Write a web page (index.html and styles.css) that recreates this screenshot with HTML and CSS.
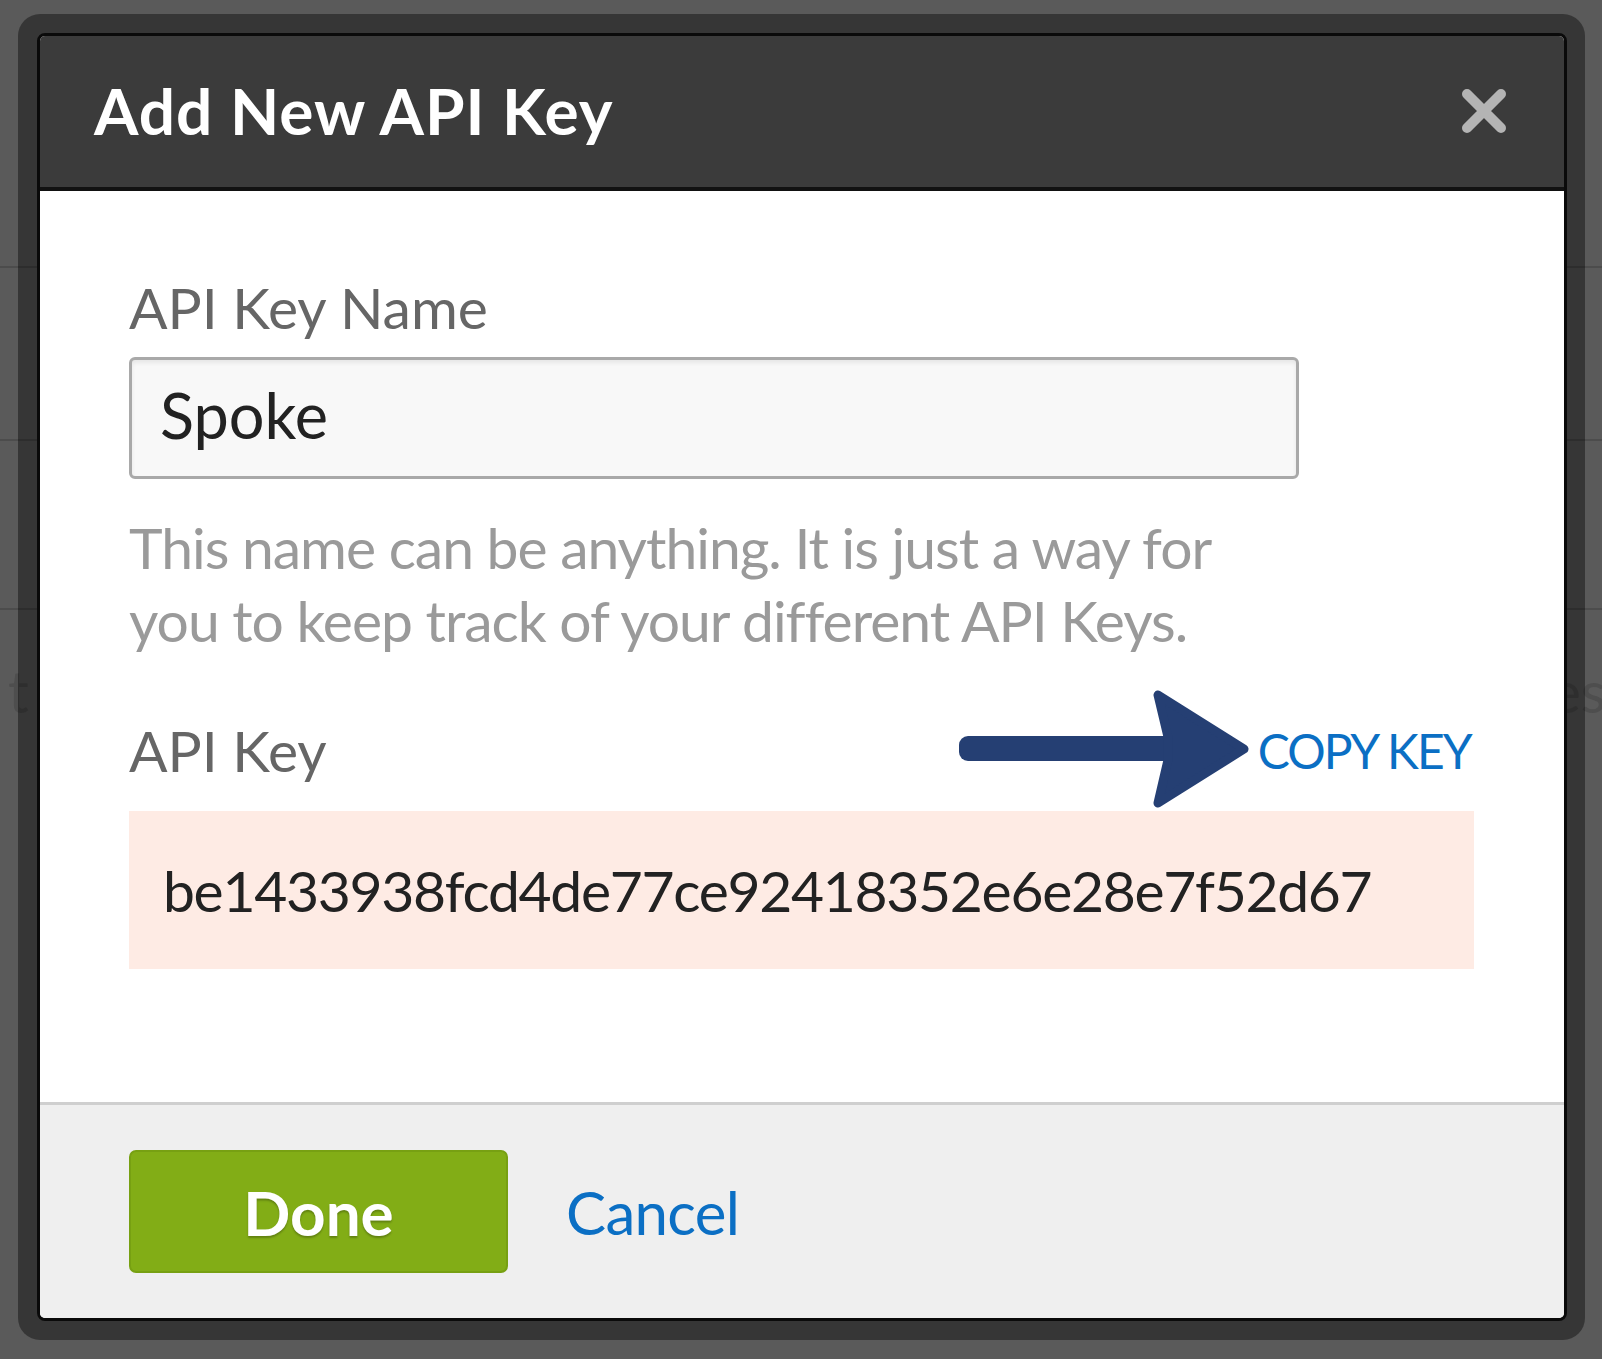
FILE: index.html
```html
<!DOCTYPE html>
<html lang="en">
<head>
<meta charset="utf-8">
<title>Add New API Key</title>
<link rel="stylesheet" href="styles.css">
</head>
<body>
  <div class="page">
    <div class="bg-row bg-row-1"></div>
    <div class="bg-row bg-row-2"></div>
    <div class="bg-row bg-row-3"></div>
    <div class="bg-row bg-row-4">
      <span class="bg-text-left">t</span>
      <span class="bg-text-right">es</span>
    </div>
  </div>

  <div class="overlay">
    <div class="frame">
      <div class="modal">
        <div class="modal-header">
          <h1 class="modal-title">Add New API Key</h1>
          <svg class="close-icon" width="48" height="48" viewBox="0 0 48 48" aria-label="Close">
            <path d="M7 7 L41 41 M41 7 L7 41" stroke="#b4b4b4" stroke-width="10" stroke-linecap="round" fill="none"/>
          </svg>
        </div>

        <div class="modal-body">
          <label class="field-label">API Key Name</label>
          <div class="text-input">Spoke</div>
          <p class="help-text">This name can be anything. It is just a way for<br>you to keep track of your different API Keys.</p>

          <div class="key-row">
            <span class="field-label key-label">API Key</span>
            <div class="copy-group">
              <svg class="arrow" width="294" height="118" viewBox="0 0 294 118">
                <rect x="2" y="46" width="216" height="25" rx="9" fill="#253f73"/>
                <path d="M201 5 L287 59 L201 113 L211 70 L211 47 Z" fill="#253f73" stroke="#253f73" stroke-width="9" stroke-linejoin="round"/>
              </svg>
              <span class="copy-key">COPY KEY</span>
            </div>
          </div>

          <div class="key-box">be1433938fcd4de77ce92418352e6e28e7f52d67</div>
        </div>

        <div class="modal-footer">
          <button class="btn-done">Done</button>
          <span class="cancel-link">Cancel</span>
        </div>
      </div>
    </div>
  </div>
</body>
</html>
```

FILE: styles.css
```css
html, body {
  margin: 0;
  padding: 0;
}

body {
  width: 1602px;
  height: 1359px;
  overflow: hidden;
  background: #5a5a5a;
  font-family: "Lato", "Liberation Sans", sans-serif;
  position: relative;
}

/* page behind the modal */
.page {
  display: flex;
  flex-direction: column;
}

.bg-row {
  border-bottom: 2px solid #4c4c4c;
}

.bg-row-1 { height: 266px; }
.bg-row-2 { height: 171px; }
.bg-row-3 { height: 167px; }

.bg-row-4 {
  height: 140px;
  border-bottom: none;
  display: flex;
  justify-content: space-between;
  align-items: center;
  font-size: 58px;
  color: #4e4e4e;
  padding-top: 10px;
}

.bg-text-left { margin-left: 8px; }
.bg-text-right { margin-right: -4px; }

/* overlay */
.overlay {
  position: absolute;
  left: 0;
  top: 0;
  width: 1602px;
  height: 1359px;
}

.frame {
  margin: 14px 0 0 18px;
  width: 1567px;
  height: 1326px;
  box-sizing: border-box;
  padding: 19px 18px 19px 19px;
  border-radius: 22px;
  background: rgba(0, 0, 0, 0.4);
}

.modal {
  height: 100%;
  box-sizing: border-box;
  border: 3px solid #0a0a0a;
  border-radius: 8px;
  overflow: hidden;
  background: #ffffff;
  display: flex;
  flex-direction: column;
}

.modal-header {
  height: 155px;
  flex: none;
  box-sizing: border-box;
  background: #3b3b3b;
  border-bottom: 4px solid #111111;
  display: flex;
  align-items: center;
  justify-content: space-between;
  padding: 0 56px 2px 54px;
}

.modal-title {
  margin: 0;
  font-family: "Lato", "Liberation Sans", sans-serif;
  font-weight: 700;
  font-size: 64px;
  color: #ffffff;
  letter-spacing: 1px;
}

.close-icon {
  display: block;
}

.modal-body {
  flex: 1;
  padding: 80px 90px 0 89px;
  display: flex;
  flex-direction: column;
  align-items: flex-start;
}

.field-label {
  display: block;
  font-size: 57px;
  line-height: 72px;
  color: #666666;
}

.text-input {
  margin-top: 14px;
  width: 1170px;
  height: 122px;
  box-sizing: border-box;
  border: 3px solid #a9a9a9;
  border-radius: 6px;
  background: #f8f8f8;
  box-shadow: inset 0 3px 4px rgba(0, 0, 0, 0.07);
  padding-left: 28px;
  font-size: 63px;
  line-height: 110px;
  color: #222222;
}

.help-text {
  margin: 32px 0 0 0;
  font-size: 57px;
  line-height: 73px;
  letter-spacing: -1px;
  color: #9a9a9a;
}

.key-row {
  margin-top: 33px;
  width: 100%;
  height: 117px;
  display: flex;
  align-items: center;
  justify-content: space-between;
}

.key-label {
  padding-top: 2px;
}

.copy-group {
  display: flex;
  align-items: center;
  margin-right: 3px;
}

.arrow {
  display: block;
  margin-right: 7px;
}

.copy-key {
  font-size: 48px;
  letter-spacing: -1.8px;
  color: #0b6fc4;
  padding-top: 4px;
}

.key-box {
  margin-top: 4px;
  width: 100%;
  height: 158px;
  box-sizing: border-box;
  background: #feebe4;
  padding-left: 34px;
  font-size: 57px;
  letter-spacing: -1.3px;
  line-height: 158px;
  color: #222222;
}

.modal-footer {
  height: 216px;
  flex: none;
  box-sizing: border-box;
  border-top: 3px solid #cfcfcf;
  background: #efefef;
  display: flex;
  align-items: center;
  padding: 0 0 0 89px;
  gap: 58px;
}

.btn-done {
  width: 379px;
  height: 123px;
  box-sizing: border-box;
  border: 2px solid #77a012;
  border-radius: 7px;
  background: #82ad16;
  color: #ffffff;
  font-family: "Lato", "Liberation Sans", sans-serif;
  font-weight: 700;
  font-size: 62px;
  text-shadow: 0 2px 2px rgba(0, 0, 0, 0.25);
  padding: 0;
}

.cancel-link {
  font-size: 60px;
  letter-spacing: -0.7px;
  color: #0b6fc4;
}
```
